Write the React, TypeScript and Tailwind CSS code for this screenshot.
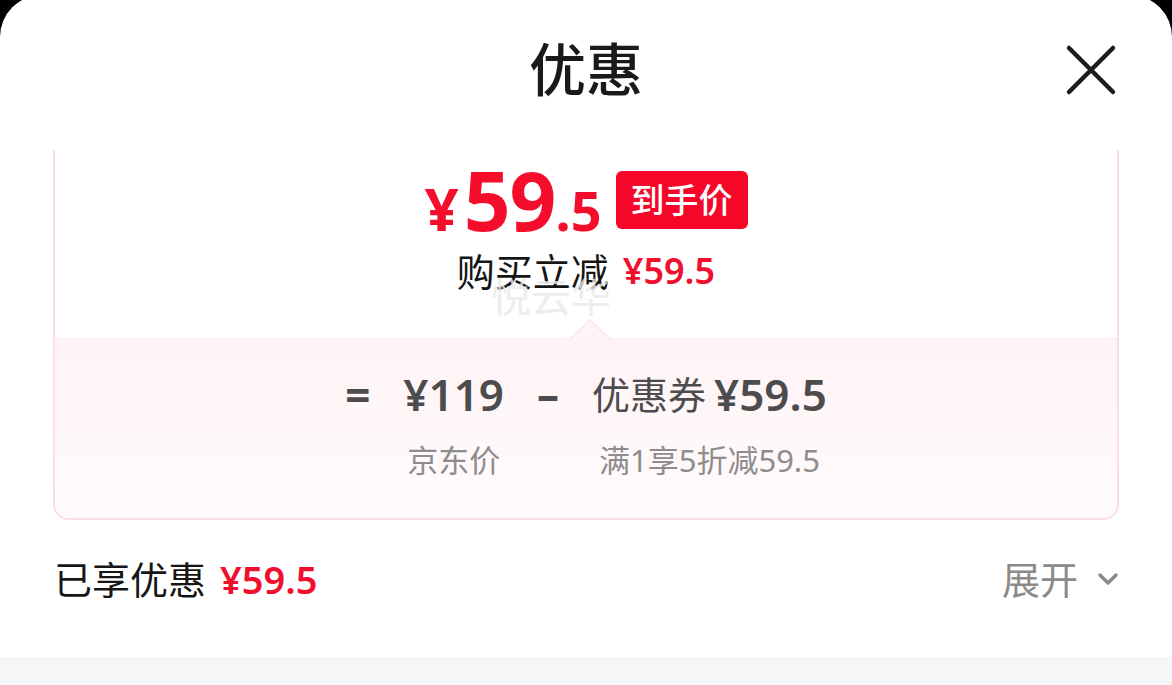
import { ChevronDown } from 'lucide-react';

const font = { fontFamily: '"Noto Sans", "Noto Sans CJK SC", sans-serif' };

export default function App() {
  return (
    <div className="h-[685px] w-[1172px] overflow-hidden bg-black" style={font}>
      <div className="-mt-[5px] flex h-[690px] flex-col rounded-t-[42px] bg-white">
        {/* Header */}
        <div className="relative flex h-[155px] shrink-0 items-center justify-center pb-[6px]">
          <h1 className="text-[57px] font-medium leading-none text-[#1a1a1a]">优惠</h1>
          <button className="absolute right-[55px] top-[49px] h-[52px] w-[52px]">
            <svg viewBox="0 0 52 52" className="h-full w-full" fill="none" stroke="#1c1c1c" strokeWidth="4.5" strokeLinecap="round">
              <path d="M4 4 L48 48 M48 4 L4 48" />
            </svg>
          </button>
        </div>

        {/* Card (scrolled so its top edge is hidden) */}
        <div className="mx-[53px] flex flex-col rounded-b-[16px] border-x-2 border-b-2 border-[#fbdde4]">
          <div className="relative flex h-[188px] flex-col items-center">
            <div className="mt-[8px] flex items-center gap-[14px]">
              <div className="flex items-baseline font-bold leading-none text-[#f50d2c]">
                <span className="mr-[5px] text-[60px]">¥</span>
                <span className="text-[82px] tracking-[-1px]">59</span>
                <span className="text-[54px]">.5</span>
              </div>
              <span className="mt-[2px] rounded-[6px] bg-[#f5072a] px-[15px] py-[6px] text-[34px] font-medium leading-[46px] text-white">
                到手价
              </span>
            </div>
            <div className="mt-[12px] flex items-center gap-[14px] leading-none">
              <span className="text-[38px] text-[#151515]">购买立减</span>
              <span className="text-[36px] font-semibold text-[#f0102e]">¥59.5</span>
            </div>
            <span className="pointer-events-none absolute left-[436px] top-[127px] text-[40px] leading-none text-[#e9e9e9] opacity-80">
              悦云华
            </span>
            <svg className="absolute bottom-[-2px] left-[515px]" width="40" height="21" viewBox="0 0 40 21">
              <path d="M0 20 L20 1 L40 20 Z" fill="#fff4f6" />
              <path d="M0 20 L20 1 L40 20" fill="none" stroke="#fde4ea" strokeWidth="1.5" />
            </svg>
          </div>
          <div className="flex h-[180px] flex-col items-center rounded-b-[14px] border-t border-[#fdebef] bg-gradient-to-b from-[#fff3f5] to-[#fffbfc] pt-[28px]">
            <div className="flex items-start gap-[33px] text-[#4c4c4e]">
              <span className="text-[44px] font-bold leading-[54px]">=</span>
              <div className="flex flex-col items-center">
                <span className="text-[44px] font-semibold leading-[54px]">¥119</span>
                <span className="mt-[24px] text-[31px] leading-none text-[#8d8d8d]">京东价</span>
              </div>
              <span className="text-[44px] font-bold leading-[54px]">–</span>
              <div className="flex flex-col items-center">
                <div className="flex items-center gap-[8px] leading-[54px]">
                  <span className="text-[38px]">优惠券</span>
                  <span className="text-[44px] font-semibold">¥59.5</span>
                </div>
                <span className="mt-[24px] text-[31px] leading-none text-[#8d8d8d]">满1享5折减59.5</span>
              </div>
            </div>
          </div>
        </div>

        {/* Summary row */}
        <div className="flex h-[137px] shrink-0 items-center justify-between pb-[20px] pl-[54px] pr-[48px]">
          <div className="flex items-center gap-[14px] leading-none">
            <span className="text-[38px] text-[#161616]">已享优惠</span>
            <span className="text-[38px] font-semibold text-[#f0102e]">¥59.5</span>
          </div>
          <div className="flex items-center gap-[14px] text-[#8a8a8a]">
            <span className="text-[38px] leading-none">展开</span>
            <ChevronDown size={32} strokeWidth={2.6} />
          </div>
        </div>

        <div className="flex-1 bg-[#f5f6f8]" />
      </div>
    </div>
  );
}
